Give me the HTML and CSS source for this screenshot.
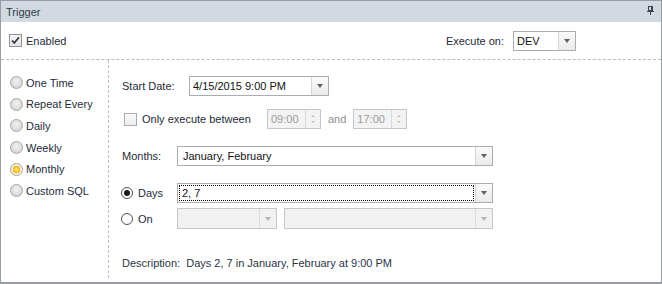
FILE: index.html
```html
<!DOCTYPE html>
<html>
	<head>
		<link rel="stylesheet" href="styles.css">
		<title>Trigger</title>
	</head>
	<body>
		<div class="panel">
			<div class="panel-head">
				<span>Trigger</span>
				<svg class="pin" width="7" height="9" viewBox="0 0 7 9">
					<rect x="1.5" y="0.5" width="4" height="4" fill="none" stroke="#3a4450"/>
					<rect x="4" y="1" width="1" height="3" fill="#3a4450"/>
					<rect x="0" y="5" width="7" height="1" fill="#3a4450"/>
					<rect x="3" y="6" width="1" height="3" fill="#3a4450"/>
				</svg>
			</div>

			<div class="top-row">
				<label class="check">
					<span class="box checked">
						<svg width="9" height="9" viewBox="0 0 9 9"><path d="M1 4.5 L3.3 7 L8 1.2" fill="none" stroke="#333" stroke-width="1.7"/></svg>
					</span>
					Enabled
				</label>
				<div class="exec">
					<span>Execute on:</span>
					<div class="combo exec-combo">
						<span class="val">DEV</span>
						<span class="btn"><i class="tri"></i></span>
					</div>
				</div>
			</div>

			<div class="body">
				<div class="kinds">
					<div class="kind"><span class="orb"></span>One Time</div>
					<div class="kind"><span class="orb"></span>Repeat Every</div>
					<div class="kind"><span class="orb"></span>Daily</div>
					<div class="kind"><span class="orb"></span>Weekly</div>
					<div class="kind"><span class="orb on"></span>Monthly</div>
					<div class="kind"><span class="orb"></span>Custom SQL</div>
				</div>

				<div class="settings">
					<div class="row start-row">
						<span class="lbl-start">Start Date:</span>
						<div class="combo start-combo">
							<span class="val">4/15/2015 9:00 PM</span>
							<span class="btn"><i class="tri"></i></span>
						</div>
					</div>

					<div class="row between-row">
						<label class="check between">
							<span class="box"></span>
							Only execute between
						</label>
						<div class="spin">
							<span class="val">09:00</span>
							<span class="spin-btn"><i class="up"></i><i class="down"></i></span>
						</div>
						<span class="and">and</span>
						<div class="spin">
							<span class="val">17:00</span>
							<span class="spin-btn"><i class="up"></i><i class="down"></i></span>
						</div>
					</div>

					<div class="row months-row">
						<span class="lbl-months">Months:</span>
						<div class="combo wide-combo">
							<span class="val pad4">January, February</span>
							<span class="btn"><i class="tri"></i></span>
						</div>
					</div>

					<div class="row days-row">
						<span class="lbl-radio"><span class="radio sel"></span>Days</span>
						<div class="combo wide-combo">
							<span class="val focus">2, 7</span>
							<span class="btn"><i class="tri"></i></span>
						</div>
					</div>

					<div class="row on-row">
						<span class="lbl-radio"><span class="radio"></span>On</span>
						<div class="combo off small-combo">
							<span class="val"></span>
							<span class="btn"><i class="tri"></i></span>
						</div>
						<div class="combo off big-combo">
							<span class="val"></span>
							<span class="btn"><i class="tri"></i></span>
						</div>
					</div>

					<div class="desc">Description:&nbsp;&nbsp;Days 2, 7 in January, February at 9:00 PM</div>
				</div>
			</div>
		</div>
	</body>
</html>
```

FILE: styles.css
```css
html, body {
	margin: 0;
	padding: 0;
	background: #ffffff;
}
body {
	font-family: "Liberation Sans", Arial, sans-serif;
	font-size: 11px;
	color: #1f2b3a;
}

.panel {
	width: 662px;
	height: 284px;
	box-sizing: border-box;
	border: 1px solid #989da4;
	border-bottom-width: 2px;
	background: #fff;
}

.panel-head {
	height: 21px;
	background: #d2d9e0;
	display: flex;
	align-items: center;
	justify-content: space-between;
	padding: 0 7px 0 5px;
	color: #2e3a47;
}
.pin {
	display: block;
	margin-top: -2px;
}

.top-row {
	height: 38px;
	box-sizing: border-box;
	border-bottom: 1px dashed #b9bdc2;
	display: flex;
	align-items: center;
	justify-content: space-between;
	padding: 0 85px 0 8px;
}

.check {
	display: flex;
	align-items: center;
}
.box {
	width: 13px;
	height: 13px;
	box-sizing: border-box;
	border: 1px solid #8e949b;
	background: linear-gradient(#f6f6f6, #e4e4e4);
	margin-right: 4px;
	display: flex;
	align-items: center;
	justify-content: center;
}
.between .box {
	border-color: #a8adb3;
	background: linear-gradient(#fbfbfb, #ececec);
	margin-right: 5px;
}

.exec {
	display: flex;
	align-items: center;
}
.exec span:first-child {
	margin-right: 9px;
}

/* combos */
.combo {
	height: 20px;
	box-sizing: border-box;
	border: 1px solid #a9adb3;
	background: #fff;
	display: flex;
}
.combo .val {
	flex: 1;
	display: flex;
	align-items: center;
	padding-left: 3px;
	color: #111;
}
.combo .val.pad4 {
	padding-left: 5px;
}
.combo .btn {
	width: 16px;
	border-left: 1px solid #d3d6da;
	background: linear-gradient(#fafafa, #ebebeb);
	display: flex;
	align-items: center;
	justify-content: center;
}
.tri {
	width: 0;
	height: 0;
	border-left: 3.5px solid transparent;
	border-right: 3.5px solid transparent;
	border-top: 4px solid #5c6167;
}
.exec-combo {
	width: 63px;
}
.start-combo {
	width: 140px;
}
.wide-combo {
	width: 316px;
}
.small-combo {
	width: 100px;
	height: 21px;
}
.big-combo {
	width: 209px;
	height: 21px;
	margin-left: 7px;
}
.combo.off {
	background: #f1f1f1;
	border-color: #c3c6ca;
}
.combo.off .btn {
	background: #f1f1f1;
	border-left-color: #dcdcdc;
}
.combo.off .tri {
	border-top-color: #b4b8bc;
}
.combo .val.focus {
	margin: 1px 1px 1px 1px;
	padding-left: 3px;
	outline: 1px dotted #000;
	outline-offset: -1px;
}

/* body */
.body {
	display: flex;
	height: 222px;
}

.kinds {
	width: 108px;
	box-sizing: border-box;
	border-right: 1px dashed #b9bdc2;
	padding: 12px 0 0 9px;
	margin-bottom: 4px;
}
.kind {
	height: 21.6px;
	display: flex;
	align-items: center;
}
.orb {
	width: 13px;
	height: 13px;
	box-sizing: border-box;
	border-radius: 50%;
	border: 1px solid #a1a6ac;
	background: radial-gradient(circle at 50% 40%, #f2f2f2 0%, #dcdcdc 60%, #cfcfcf 100%);
	margin-right: 3px;
	position: relative;
}
.orb.on {
	border-color: #b3a57e;
	background: radial-gradient(circle, #ffe58a 0%, #fbc52c 35%, #efa500 45%, #f4f4f4 52%, #e2e2e2 100%);
}

.settings {
	flex: 1;
	padding: 16px 0 0 13px;
}
.row {
	display: flex;
	align-items: center;
}
.start-row {
	height: 20px;
}
.lbl-start {
	width: 67px;
}
.between-row {
	height: 20px;
	margin-top: 13px;
}
.between {
	width: 145px;
	padding-left: 2px;
	box-sizing: border-box;
}
.spin {
	width: 54px;
	height: 20px;
	box-sizing: border-box;
	border: 1px solid #c3c6ca;
	background: #f3f3f3;
	display: flex;
	color: #9b9b9b;
}
.spin .val {
	flex: 1;
	display: flex;
	align-items: center;
	padding-left: 3px;
}
.spin-btn {
	width: 14px;
	border-left: 1px solid #dadada;
	display: flex;
	flex-direction: column;
	align-items: center;
	justify-content: center;
	gap: 4px;
}
.spin-btn .up {
	width: 0;
	height: 0;
	border-left: 2px solid transparent;
	border-right: 2px solid transparent;
	border-bottom: 2px solid #c0c0c0;
}
.spin-btn .down {
	width: 0;
	height: 0;
	border-left: 2px solid transparent;
	border-right: 2px solid transparent;
	border-top: 2px solid #c0c0c0;
}
.and {
	margin: 0 7px;
	color: #8a8f95;
}

.months-row {
	height: 20px;
	margin-top: 17px;
}
.lbl-months {
	width: 55px;
}
.days-row {
	height: 20px;
	margin-top: 17px;
}
.on-row {
	height: 21px;
	margin-top: 5px;
}
.lbl-radio {
	width: 55px;
	display: flex;
	align-items: center;
}
.radio {
	width: 12px;
	height: 12px;
	box-sizing: border-box;
	border-radius: 50%;
	border: 1px solid #4d5157;
	background: #fff;
	margin: 0 5px 0 -1px;
	display: flex;
	align-items: center;
	justify-content: center;
}
.radio.sel::after {
	content: "";
	width: 6px;
	height: 6px;
	border-radius: 50%;
	background: #1a1a1a;
}

.desc {
	margin-top: 27px;
	height: 14px;
	line-height: 14px;
	color: #2b3545;
}
```
